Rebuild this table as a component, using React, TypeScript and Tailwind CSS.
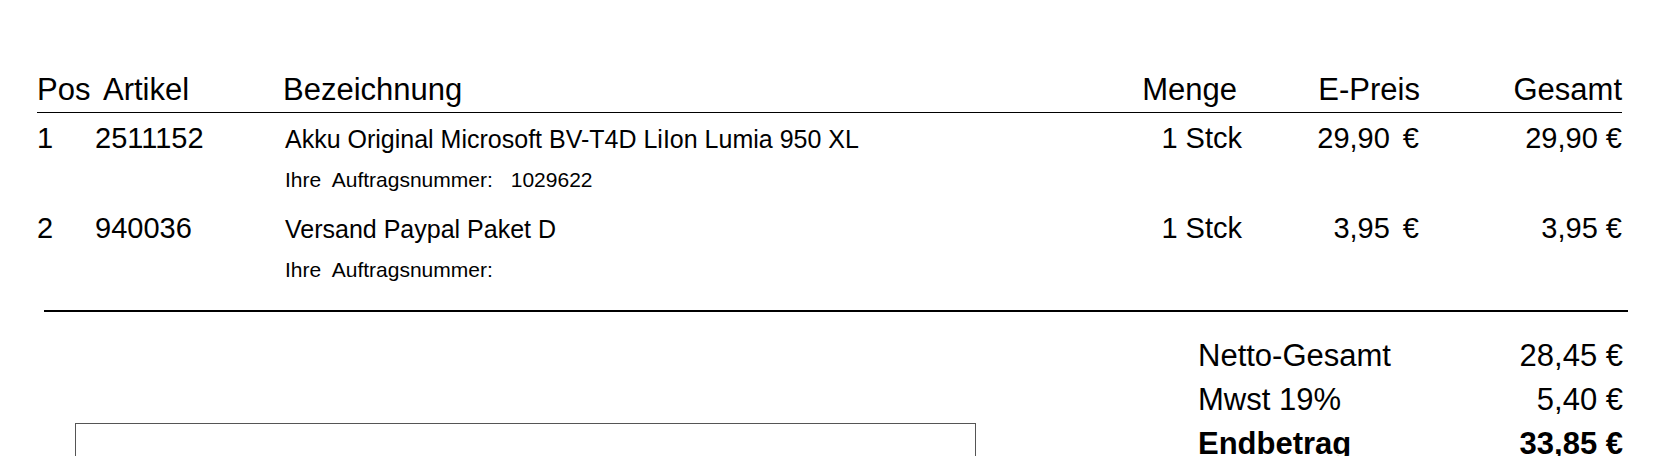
const font = { fontFamily: '"Liberation Sans", Arial, Helvetica, sans-serif' };

type Line = {
  pos: string;
  artikel: string;
  text: string;
  auftrag: string;
  menge: string;
  preis: string;
  gesamt: string;
};

const lines: Line[] = [
  {
    pos: "1",
    artikel: "2511152",
    text: "Akku Original Microsoft BV-T4D LiIon Lumia 950 XL",
    auftrag: "1029622",
    menge: "1 Stck",
    preis: "29,90",
    gesamt: "29,90 €",
  },
  {
    pos: "2",
    artikel: "940036",
    text: "Versand Paypal Paket D",
    auftrag: "",
    menge: "1 Stck",
    preis: "3,95",
    gesamt: "3,95 €",
  },
];

function ItemRow({ line }: { line: Line }) {
  return (
    <div className="flex items-baseline text-[29px] leading-[36px]">
      <div className="w-[58px]">{line.pos}</div>
      <div className="w-[188px]">{line.artikel}</div>
      <div className="flex-1 pl-[2px]">
        <div className="text-[25px] leading-[38px]">{line.text}</div>
        <div className="flex text-[21px] leading-[44px]">
          <span className="whitespace-pre">Ihre  Auftragsnummer:</span>
          <span className="ml-[18px]">{line.auftrag}</span>
        </div>
      </div>
      <div className="w-[110px] text-right">{line.menge}</div>
      <div className="w-[177px] text-right">
        {line.preis}
        <span className="ml-[13px]">€</span>
      </div>
      <div className="w-[203px] text-right">{line.gesamt}</div>
    </div>
  );
}

export default function App() {
  return (
    <div className="h-[456px] w-[1677px] overflow-hidden bg-white text-black" style={font}>
      <div className="ml-[37px] w-[1585px] pt-[74px]">
        <div className="flex border-b border-black pb-[6px] text-[31px] leading-[32px]">
          <div className="w-[66px]">Pos</div>
          <div className="w-[180px]">Artikel</div>
          <div className="flex-1">Bezeichnung</div>
          <div className="w-[160px] text-right">Menge</div>
          <div className="w-[183px] text-right">E-Preis</div>
          <div className="w-[202px] text-right">Gesamt</div>
        </div>
        <div className="mt-[7px] flex flex-col gap-[8px]">
          {lines.map((l) => (
            <ItemRow key={l.pos} line={l} />
          ))}
        </div>
      </div>

      <div className="ml-[44px] mt-[18px] h-[2px] w-[1584px] bg-black" />

      <div className="flex">
        <div className="ml-[75px] mt-[111px] h-[120px] w-[901px] border border-[#555]" />
        <div className="ml-[222px] w-[425px] pt-[22px] text-[31px] leading-[44px]">
          <div className="flex justify-between">
            <span>Netto-Gesamt</span>
            <span>28,45 €</span>
          </div>
          <div className="flex justify-between">
            <span>Mwst 19%</span>
            <span>5,40 €</span>
          </div>
          <div className="flex justify-between font-bold">
            <span>Endbetrag</span>
            <span>33,85 €</span>
          </div>
        </div>
      </div>
    </div>
  );
}
